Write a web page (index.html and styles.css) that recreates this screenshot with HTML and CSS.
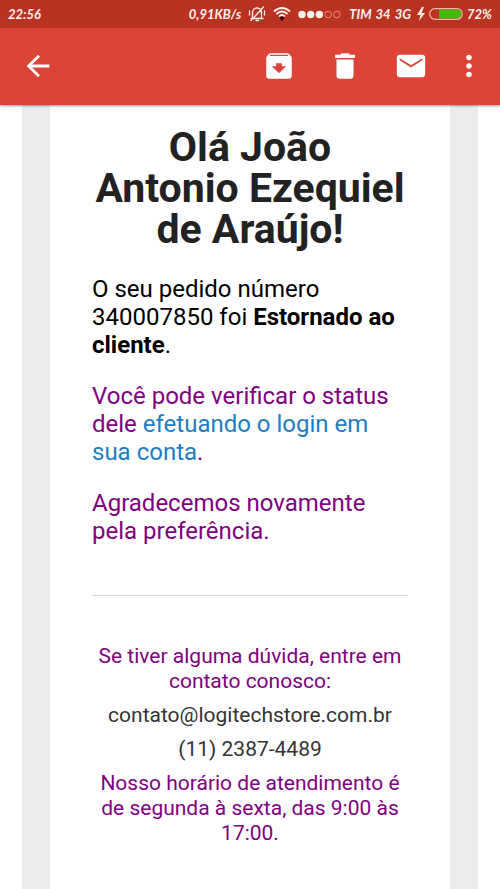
FILE: index.html
```html
<!DOCTYPE html>
<html lang="pt-BR">
<head>
<meta charset="utf-8">
<meta name="viewport" content="width=device-width, initial-scale=1">
<title>Pedido 340007850</title>
<link rel="stylesheet" href="styles.css">
</head>
<body>
<div class="status">
  <span class="time">22:56</span>
  <div class="status-info">
    <span class="speed">0,91KB/s</span>
    <svg class="bell" viewBox="0 0 18 18" fill="none" stroke="currentColor" stroke-width="1.3" stroke-linecap="round" aria-hidden="true"><path d="M4.500 13V7.500a4.500 4.500 0 0 1 9 0V13M3 13.500h12M8 15.500h2.500M3 15.500 15.500 2M1.500 6v4M16.500 6v4"/></svg>
    <svg class="wifi" viewBox="0 0 18 18" fill="none" stroke="currentColor" stroke-width="1.700" aria-hidden="true"><path d="M1 6.500Q9-.5 17 6.500M3.500 9Q9 4 14.500 9M6 11.500Q9 8.500 12 11.500"/><path d="M6.500 12.500Q9 10.500 11.500 12.500L9 16.500Z" fill="#2c0b08" stroke="none"/></svg>
    <svg class="signal" viewBox="0 0 43 9" aria-hidden="true"><g fill="currentColor"><circle cx="4" cy="4.500" r="3.700"/><circle cx="12.700" cy="4.500" r="3.700"/><circle cx="21.400" cy="4.500" r="3.700"/></g><g fill="none" stroke="#f08a7c"><circle cx="30.100" cy="4.500" r="3.300"/><circle cx="38.800" cy="4.500" r="3.300"/></g></svg>
    <span class="carrier"><span>TIM</span> <span>34</span> <span>3G</span></span>
    <svg class="bolt" viewBox="0 0 8 14" fill="currentColor" aria-hidden="true"><path d="M5 0 0 8h3.500L2 14l6-8H4.500L7 0z"/></svg>
    <svg class="battery" viewBox="0 0 34 12" aria-hidden="true"><path d="M10 1.500h18a4.500 4.500 0 0 1 0 9H10z" fill="#43b90b"/><rect x=".7" y=".7" width="32.600" height="10.600" rx="5.300" fill="none" stroke="#f3b3a5" stroke-width="1.200"/></svg>
    <span class="level">72%</span>
  </div>
</div>
<header class="toolbar">
  <button class="action back" type="button" aria-label="Voltar"><svg viewBox="0 0 24 24"><path d="M20 11H7.830l5.590-5.590L12 4l-8 8 8 8 1.410-1.410L7.830 13H20v-2z"/></svg></button>
  <button class="action" type="button" aria-label="Arquivar"><svg viewBox="0 0 24 24"><path d="M20.540 5.230l-1.390-1.680C18.880 3.210 18.470 3 18 3H6c-.47 0-.88.21-1.160.55L3.460 5.230C3.170 5.570 3 6.020 3 6.500V19c0 1.100.9 2 2 2h14c1.100 0 2-.9 2-2V6.500c0-.48-.17-.93-.46-1.270zM12 17.200L7 12.200H10v-2.200h4v2.200h3L12 17.200zM5.120 5l.81-1h12l.94 1H5.120z"/></svg></button>
  <button class="action" type="button" aria-label="Excluir"><svg viewBox="0 0 24 24"><path d="M6 19c0 1.100.9 2 2 2h8c1.100 0 2-.9 2-2V7.400H6V19zM19 4h-3.500l-1-1h-5l-1 1H5v2.400h14V4z"/></svg></button>
  <button class="action" type="button" aria-label="Marcar como não lida"><svg viewBox="0 0 24 24"><path d="M20 4H4c-1.100 0-1.990.9-1.990 2L2 18c0 1.100.9 2 2 2h16c1.100 0 2-.9 2-2V6c0-1.100-.9-2-2-2zm0 4l-8 5-8-5V6.500l8 5 8-5V8z"/></svg></button>
  <button class="action more" type="button" aria-label="Mais opções"><svg viewBox="0 0 24 24"><path d="M12 8c1.100 0 2-.9 2-2s-.9-2-2-2-2 .9-2 2 .9 2 2 2zm0 2c-1.100 0-2 .9-2 2s.9 2 2 2 2-.9 2-2-.9-2-2-2zm0 6c-1.100 0-2 .9-2 2s.9 2 2 2 2-.9 2-2-.9-2-2-2z"/></svg></button>
</header>
<main class="message">
  <article class="letter">
    <h1>Olá João<br>Antonio Ezequiel<br>de Araújo!</h1>
    <p class="order">O seu pedido número 340007850 foi <strong>Estornado ao cliente</strong>.</p>
    <p>Você pode verificar o status dele <a href="#login">efetuando o login em sua conta</a>.</p>
    <p>Agradecemos novamente pela preferência.</p>
    <hr>
    <footer class="contact">
      <p>Se tiver alguma dúvida, entre em contato conosco:</p>
      <a href="mailto:contato@logitechstore.com.br">contato@logitechstore.com.br</a>
      <a href="tel:+551123874489">(11) 2387-4489</a>
      <p>Nosso horário de atendimento é de segunda à sexta, das 9:00 às 17:00.</p>
    </footer>
  </article>
</main>
</body>
</html>
```
FILE: styles.css
```css
* {
  box-sizing: border-box;
}

body {
  margin: 0;
  min-height: 100vh;
  display: flex;
  flex-direction: column;
  background: #fff;
  font-family: Roboto, "Liberation Sans", sans-serif;
}

.status {
  display: flex;
  justify-content: space-between;
  align-items: center;
  height: 28px;
  padding: 0 8px;
  background: #b93222;
  color: #fff0ec;
  font: italic 700 13px Lato, Roboto, sans-serif;
  white-space: nowrap;
}

.status svg {
  display: block;
}

.status-info {
  display: flex;
  align-items: center;
}

.bell {
  width: 18px;
  height: 18px;
  margin-left: 7px;
}

.wifi {
  width: 18px;
  height: 18px;
  margin-left: 7px;
}

.signal {
  width: 43px;
  height: 9px;
  margin-left: 7px;
}

.carrier {
  display: flex;
  gap: 4px;
  margin-left: 8px;
}

.bolt {
  width: 8px;
  height: 14px;
  margin-left: 6px;
}

.battery {
  width: 34px;
  height: 12px;
  margin: 0 4px;
}

.toolbar {
  position: relative;
  display: flex;
  align-items: center;
  gap: 32px;
  height: 77px;
  padding: 0 14px 2px 21px;
  background: #db4437;
  box-shadow: 0 1px 2px rgba(0, 0, 0, 0.4);
}

.action {
  width: 34px;
  height: 34px;
  padding: 0;
  border: 0;
  background: none;
  color: #fff;
}

.action svg {
  display: block;
  width: 34px;
  height: 34px;
  fill: currentColor;
}

.back {
  margin-right: auto;
}

.more {
  margin-left: -8px;
}

.message {
  flex: 1;
  display: flex;
  margin: 0 22px;
  padding: 0 28px;
  background: #e9ebec;
}

.letter {
  flex: 1;
  padding: 22px 42px 40px;
  background: #fff;
  color: #800080;
  font-size: 24px;
  line-height: 28px;
}

h1 {
  margin: 0 0 25px;
  color: #222;
  font-size: 41px;
  line-height: 41px;
  text-align: center;
}

p {
  margin: 0 0 23px;
}

.order {
  color: #000;
}

a {
  color: #217dc1;
  text-decoration: none;
}

hr {
  height: 1px;
  margin: 50px 0 48px;
  border: 0;
  background: #d9d9d9;
}

.contact {
  display: flex;
  flex-direction: column;
  align-items: center;
  gap: 9px;
  font-size: 21px;
  line-height: 25px;
  text-align: center;
}

.contact p {
  margin: 0;
}

.contact a {
  color: #333;
}
```
